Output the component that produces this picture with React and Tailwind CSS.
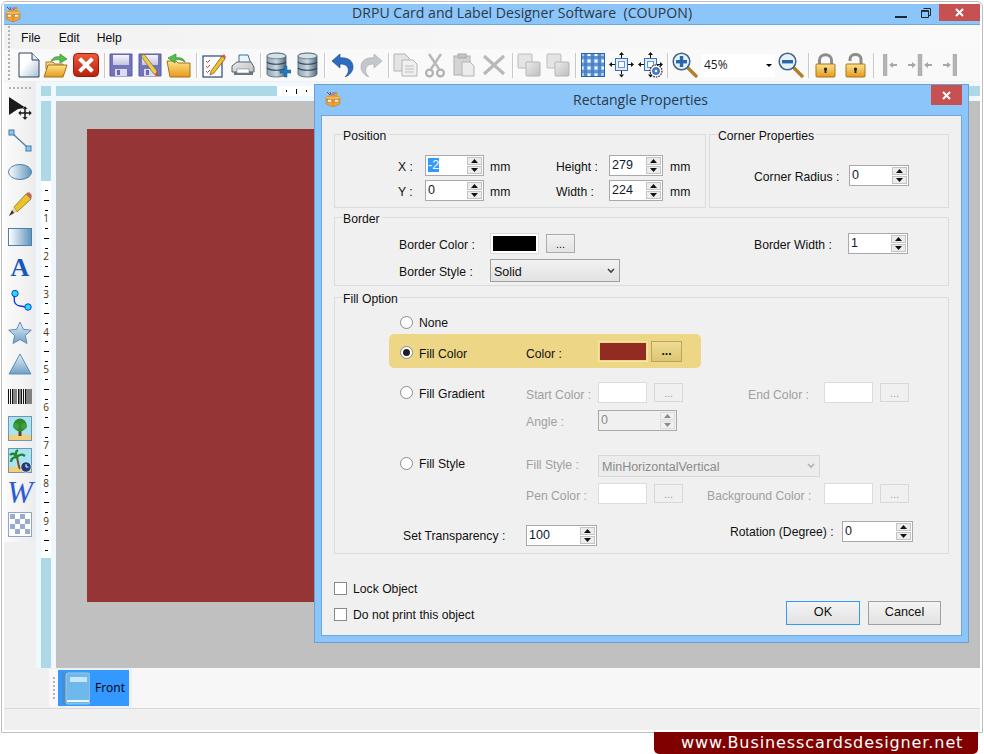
import React from "react";

const Defs = () => (
  <svg className="absolute w-0 h-0" aria-hidden="true">
    <defs>
      <linearGradient id="gBlueH" x1="0" x2="1" y1="0" y2="0"><stop offset="0" stopColor="#ffffff" /><stop offset="1" stopColor="#5f95bd" /></linearGradient>
      <linearGradient id="gBlueV" x1="0" x2="0" y1="0" y2="1"><stop offset="0" stopColor="#e8f1f8" /><stop offset="1" stopColor="#6e9fc6" /></linearGradient>
      <linearGradient id="gGold" x1="0" x2="0" y1="0" y2="1"><stop offset="0" stopColor="#fde38a" /><stop offset="1" stopColor="#e69a1c" /></linearGradient>
      <linearGradient id="gRed" x1="0" x2="0" y1="0" y2="1"><stop offset="0" stopColor="#ee5a3c" /><stop offset="1" stopColor="#b8200c" /></linearGradient>
      <linearGradient id="gDoc" x1="0" x2="1" y1="0" y2="1"><stop offset="0.4" stopColor="#ffffff" /><stop offset="1" stopColor="#a9bfd8" /></linearGradient>
      <linearGradient id="gDb" x1="0" x2="1" y1="0" y2="0"><stop offset="0" stopColor="#8ea3b3" /><stop offset="0.5" stopColor="#c9d6de" /><stop offset="1" stopColor="#51697c" /></linearGradient>
      <linearGradient id="gGray" x1="0" x2="1" y1="0" y2="1"><stop offset="0" stopColor="#ececec" /><stop offset="1" stopColor="#bdbdbd" /></linearGradient>
      <linearGradient id="gFlop" x1="0" x2="0" y1="0" y2="1"><stop offset="0" stopColor="#f4f4fb" /><stop offset="1" stopColor="#c4c4e2" /></linearGradient>
    </defs>
  </svg>
);

const BoxLogo = ({ className }) => (
  <svg viewBox="0 0 16 16" className={className}>
    <path d="M2 1l3 3M5 1l1 3" stroke="#555" strokeWidth="1" />
    <circle cx="8.5" cy="2.5" r="1.5" fill="#d75fa0" />
    <circle cx="11" cy="2" r="1.3" fill="#7ab648" />
    <circle cx="12" cy="4" r="1.2" fill="#e8b020" />
    <path d="M1 6l7-2 7 2v7l-7 3-7-3z" fill="#f0a53a" stroke="#c97a18" strokeWidth="0.6" />
    <path d="M8 7v9" stroke="#c97a18" strokeWidth="0.8" />
    <path d="M1 6l7 1.5L15 6" fill="none" stroke="#fbd488" strokeWidth="0.8" />
    <rect x="2.5" y="8.5" width="4" height="2.5" fill="#fff" stroke="#8a5a10" strokeWidth="0.4" />
    <rect x="9.5" y="8.5" width="4" height="2.5" fill="#fff" stroke="#8a5a10" strokeWidth="0.4" />
  </svg>
);

const NewDoc = () => (
  <svg viewBox="0 0 22 26" className="w-[22px] h-[26px]">
    <path d="M1 1h13l7 7v17H1z" fill="url(#gDoc)" stroke="#2a4258" strokeWidth="1" />
    <path d="M14 1v7h7" fill="#dfe8f0" stroke="#2a4258" strokeWidth="1" />
  </svg>
);
const FolderOpen = () => (
  <svg viewBox="0 0 25 26" className="w-[25px] h-[26px]">
    <path d="M3 10h7l2 2h8v5H3z" fill="#f7d68a" stroke="#b0781c" />
    <path d="M6 25L1 25 5 13h19l-4 12z" fill="url(#gGold)" stroke="#a8701a" />
    <path d="M8 9c2-4 6-5 9-4V2l7 5-7 4V8c-3-1-6 0-9 1z" fill="#58c04a" stroke="#2c8a2c" strokeWidth="0.7" />
  </svg>
);
const RedX = () => (
  <svg viewBox="0 0 26 24" className="w-[26px] h-[24px]">
    <rect x="0.5" y="0.5" width="25" height="23" rx="4" fill="url(#gRed)" stroke="#9a1a08" />
    <path d="M8 7l10 10M18 7L8 17" stroke="#fff" strokeWidth="4" strokeLinecap="square" />
  </svg>
);
const Floppy = ({ pencil }) => (
  <svg viewBox="0 0 24 24" className="w-[24px] h-[24px]">
    <path d="M1 1h22v22H1z" fill="#7474b8" stroke="#5a5aa2" />
    <rect x="4" y="2" width="16" height="10" fill="url(#gFlop)" />
    <rect x="6" y="16" width="12" height="7" fill="#dcdcee" />
    <rect x="8" y="17" width="3" height="5" fill="#6a6ab0" />
    {pencil && <path d="M3 3l3-2 13 17-1 4-3-2z" fill="#ecca52" stroke="#6a5a20" strokeWidth="0.6" />}
    {pencil && <circle cx="18.5" cy="21.5" r="1.6" fill="#d84a3a" />}
  </svg>
);
const FolderBack = () => (
  <svg viewBox="0 0 25 26" className="w-[25px] h-[26px]">
    <path d="M1 9h9l2 2h12v14H4z" fill="url(#gGold)" stroke="#a8701a" />
    <path d="M19 10c-1-3-4-5-9-4V2L2 6l7 5V8c4-1 7 0 10 2z" fill="#58c04a" stroke="#2c8a2c" strokeWidth="0.7" />
  </svg>
);
const EditIcon = () => (
  <svg viewBox="0 0 24 25" className="w-[24px] h-[25px]">
    <rect x="1" y="3" width="19" height="21" fill="#fff" stroke="#27477a" strokeWidth="1.2" />
    <path d="M4 8l1.5 1.5L8 7M4 13l1.5 1.5L8 12M4 18l1.5 1.5L8 17" stroke="#d4382c" strokeWidth="1" fill="none" />
    <path d="M9 18l-1 4 4-2L23 6l-3-3z" fill="#f0c030" stroke="#6a5414" strokeWidth="0.7" />
    <path d="M20 3l3 3 1-2-2-3z" fill="#e0584a" />
  </svg>
);
const Printer = () => (
  <svg viewBox="0 0 24 24" className="w-[24px] h-[24px]">
    <path d="M8 2h9l3 9H8z" fill="#eaf4fc" stroke="#3f6f96" />
    <path d="M1 13l5-4h14l3 5v5H1z" fill="url(#gGray)" stroke="#55636e" />
    <path d="M3 19h19v3H3z" fill="#6c7680" />
    <rect x="6" y="16" width="12" height="4" fill="#fff" stroke="#7d8890" strokeWidth="0.6" />
  </svg>
);
const Db = ({ plus }) => (
  <svg viewBox={plus ? "0 0 25 26" : "0 0 21 26"} className={plus ? "w-[25px] h-[26px]" : "w-[21px] h-[26px]"}>
    <path d="M1 4c0-4 19-4 19 0v18c0 4-19 4-19 0z" fill="url(#gDb)" stroke="#4c6172" strokeWidth="0.8" />
    <ellipse cx="10.5" cy="4" rx="9.5" ry="2.8" fill="#d6e0e7" stroke="#4c6172" strokeWidth="0.7" />
    <path d="M1 10c3 3 16 3 19 0M1 16c3 3 16 3 19 0" fill="none" stroke="#33495a" strokeWidth="1.2" />
    {plus && <path d="M18 14h3v4h4v3h-4v4h-3v-4h-4v-3h4z" fill="#2479b8" stroke="#15598c" strokeWidth="0.5" />}
  </svg>
);
const Undo = ({ gray }) => (
  <svg viewBox="0 0 23 24" className={`w-[23px] h-[24px] ${gray ? "-scale-x-100" : ""}`}>
    <path d="M1 8l8-7v4c8-1 13 3 13 9 0 4-3 8-8 10 3-3 4-6 3-9-1-3-4-4-8-4v4z" fill={gray ? "#c4c8cc" : "#2f6cc0"} stroke={gray ? "#a8adb2" : "#1d4e96"} strokeWidth="0.7" />
  </svg>
);
const CopyGray = () => (
  <svg viewBox="0 0 25 24" className="w-[25px] h-[24px]">
    <path d="M1 1h11l4 4v13H1z" fill="#e4e4e4" stroke="#b4b4b4" />
    <path d="M9 7h11l4 4v12H9z" fill="#f0f0f0" stroke="#b4b4b4" />
    <path d="M12 13h9M12 16h9M12 19h9" stroke="#bcbcbc" />
  </svg>
);
const CutGray = () => (
  <svg viewBox="0 0 20 25" className="w-[20px] h-[25px]">
    <path d="M4 1l10 15M16 1L6 16" stroke="#b8b8b8" strokeWidth="2.4" />
    <circle cx="4.5" cy="20" r="3.4" fill="none" stroke="#b0b0b0" strokeWidth="2.2" />
    <circle cx="15.5" cy="20" r="3.4" fill="none" stroke="#b0b0b0" strokeWidth="2.2" />
  </svg>
);
const PasteGray = () => (
  <svg viewBox="0 0 22 24" className="w-[22px] h-[24px]">
    <rect x="1" y="3" width="16" height="19" fill="#d4d4d4" stroke="#b0b0b0" />
    <rect x="5" y="1" width="8" height="4" fill="#c4c4c4" stroke="#a8a8a8" />
    <path d="M9 9h8l4 4v10H9z" fill="#ececec" stroke="#b4b4b4" />
  </svg>
);
const XGray = () => (
  <svg viewBox="0 0 24 22" className="w-[24px] h-[22px]">
    <path d="M2 2l20 18M22 2L2 20" stroke="#b9b9b9" strokeWidth="3.2" />
  </svg>
);
const Layers = () => (
  <svg viewBox="0 0 24 24" className="w-[24px] h-[24px]">
    <rect x="1" y="1" width="14" height="14" rx="1" fill="#e4e4e4" stroke="#bcbcbc" />
    <rect x="9" y="9" width="14" height="14" rx="1" fill="url(#gGray)" stroke="#b4b4b4" />
  </svg>
);
const GridIcon = () => (
  <svg viewBox="0 0 24 24" className="w-[24px] h-[24px]">
    <rect width="24" height="24" fill="#a8c6ea" />
    <path d="M1 3h22v3H1zM1 10h22v3H1zM1 17h22v3H1z" fill="#4a86cf" opacity="0.8" />
    <path d="M3 1h3v22H3zM10 1h3v22h-3zM17 1h3v22h-3z" fill="#3d7cc9" opacity="0.8" />
    <path d="M7 1h2v2H7zM14 1h2v2h-2zM7 7h2v2H7zM14 7h2v2h-2zM1 7h1v2H1zM21 7h2v2h-2zM7 14h2v2H7zM14 14h2v2h-2zM1 14h1v2H1zM21 14h2v2h-2zM7 21h2v2H7zM14 21h2v2h-2z" fill="#fff" />
    <rect x="0.5" y="0.5" width="23" height="23" fill="none" stroke="#2a62a8" />
  </svg>
);
const MoveIcon = ({ gear }) => (
  <svg viewBox="0 0 25 26" className="w-[25px] h-[26px]">
    <rect x="6.5" y="6.5" width="12" height="12" fill="#e4eefa" stroke="#3a6ec0" />
    <rect x="9.5" y="9.5" width="6" height="6" fill="#fff" stroke="#6a96d8" />
    <path d="M12.5 0l-2.5 3h5zM12.5 25.5l-2.5-3h5zM0 12.5l3-2.5v5zM25 12.5l-3-2.5v5z" fill="#111" />
    <path d="M12.5 3v3M12.5 19v3M3 12.5h3M19 12.5h3" stroke="#111" />
    {gear && <circle cx="18" cy="19" r="6" fill="#fff" stroke="#222" strokeWidth="1.2" strokeDasharray="1.6 1" />}
    {gear && <circle cx="18" cy="19" r="3.6" fill="#4a80d8" stroke="#1d3c78" strokeWidth="0.6" />}
    {gear && <circle cx="18" cy="19" r="1.2" fill="#fff" />}
  </svg>
);
const Mag = ({ plus }) => (
  <svg viewBox="0 0 26 26" className="w-[26px] h-[26px]">
    <path d="M15 15l9 9" stroke="#b0802c" strokeWidth="3.4" strokeLinecap="round" />
    <circle cx="9.5" cy="9.5" r="8.3" fill="#e6f1fa" stroke="#43647e" strokeWidth="1.5" />
    <rect x="4" y="8" width="11" height="3.4" fill="#2a66a8" />
    {plus && <rect x="7.8" y="4" width="3.4" height="11" fill="#2a66a8" />}
  </svg>
);
const Lock = ({ open }) => (
  <svg viewBox="0 0 21 25" className="w-[21px] h-[25px]">
    {open
      ? <path d="M5 8V6c0-6 11-6 11 0v6" fill="none" stroke="#8c8c8c" strokeWidth="3" />
      : <path d="M4.5 12V7c0-7 12-7 12 0v5" fill="none" stroke="#8c8c8c" strokeWidth="3" />}
    <rect x="1" y="11" width="19" height="13" rx="1" fill="url(#gGold)" stroke="#a8761a" />
    <circle cx="10.5" cy="16" r="1.6" fill="#222" />
    <rect x="9.6" y="16" width="1.8" height="4" fill="#222" />
  </svg>
);
const Bar = ({ x }) => <rect x={x} y="0" width="4" height="22" fill="#b4b4b4" stroke="#a0a0a0" strokeWidth="0.4" />;
const AlignL = () => (
  <svg viewBox="0 0 14 22" className="w-[14px] h-[22px]"><Bar x={0} /><path d="M6 11l4-3v2h4v2h-4v2z" fill="#a8a8a8" /></svg>
);
const AlignC = () => (
  <svg viewBox="0 0 24 22" className="w-[24px] h-[22px]"><Bar x={10} /><path d="M8 11l-4-3v2H0v2h4v2zM16 11l4-3v2h4v2h-4v2z" fill="#a8a8a8" /></svg>
);
const AlignR = () => (
  <svg viewBox="0 0 14 22" className="w-[14px] h-[22px]"><Bar x={10} /><path d="M8 11L4 8v2H0v2h4v2z" fill="#a8a8a8" /></svg>
);
const Sep = ({ cls }) => <div className={`w-px h-[25px] bg-[#c8c8c8] border-r border-white box-content ${cls}`} />;

const Gripper = ({ cls }) => (
  <div className={`flex flex-col gap-[2px] ${cls}`}>
    {[0, 1, 2, 3, 4, 5].map((i) => <span key={i} className="block w-[2px] h-[2px] bg-[#b4b4b4]" />)}
  </div>
);

const Tri = ({ up, dim }) => (
  <svg viewBox="0 0 7 4" className="w-[7px] h-[4px]">
    <path d={up ? "M3.5 0L7 4H0z" : "M0 0h7L3.5 4z"} fill={dim ? "#8a8a8a" : "#111"} />
  </svg>
);

const Spin = ({ value, w, selected, dim }) => (
  <div className={`flex shrink-0 h-[21px] border border-[#a9a9a9] p-px ${w} ${dim ? "bg-[#f0f0f0]" : "bg-white"}`}>
    <span className={`flex-1 pl-px text-[12.5px] leading-[17px] ${dim ? "text-[#8a8a8a]" : "text-[#0a1a30]"}`}>
      {selected ? <span className="bg-[#3399ff] text-white">{value}</span> : value}
    </span>
    <div className="w-[15px] flex flex-col gap-px">
      <span className={`flex-1 flex items-center justify-center ${dim ? "bg-[#f0f0f0] border border-[#dcdcdc]" : "bg-[#ececec] border border-[#c4c4c4]"}`}><Tri up dim={dim} /></span>
      <span className={`flex-1 flex items-center justify-center ${dim ? "bg-[#f0f0f0] border border-[#dcdcdc]" : "bg-[#ececec] border border-[#c4c4c4]"}`}><Tri dim={dim} /></span>
    </div>
  </div>
);

/* Label: the reference's captions sit a little below the centre of their row */
const L = ({ cls, pt = "pt-[4px]", children }) => <span className={`shrink-0 ${pt} ${cls || ""}`}>{children}</span>;

const Swatch = ({ cls, color }) => <div className={`shrink-0 h-[21px] border border-[#dcdcdc] p-[2px] bg-white ${cls}`}><div className={`w-full h-full ${color}`} /></div>;
const Blank = ({ cls }) => <div className={`shrink-0 w-[49px] h-[21px] bg-white border border-[#dcdcdc] ${cls || ""}`} />;
const DimBtn = ({ cls }) => (
  <div className={`shrink-0 w-[29px] h-[19px] border border-[#d8d8d8] bg-[#f0f0f0] text-[#a0a0a0] text-[11px] leading-[19px] text-center ${cls}`}>...</div>
);
const Radio = ({ on, cls }) => (
  <div className={`shrink-0 w-[13px] h-[13px] rounded-full border border-[#8a8a8a] bg-white flex items-center justify-center ${cls}`}>
    {on && <span className="block w-[7px] h-[7px] rounded-full bg-[#1f1f1f]" />}
  </div>
);
const Group = ({ title, titleCls, cls, children }) => (
  <div className={`relative border border-[#dcdcdc] ${cls}`}>
    <span className={`absolute -top-[5px] bg-[#f0f0f0] pr-[2px] leading-[13px] text-[#101010] ${titleCls}`}>{title}</span>
    {children}
  </div>
);
const Win8Btn = ({ cls, children }) => (
  <div className={`h-[24px] flex items-center justify-center text-[12.7px] text-[#101010] bg-gradient-to-b from-[#f4f4f4] to-[#e2e2e2] ${cls}`}>{children}</div>
);

const Ruler = () => (
  <div className="w-[10px] flex-1 bg-[#add8e6] flex flex-col">
    <div className="h-[80px]" />
    <div className="h-[377px] bg-white flex flex-col items-center overflow-hidden">
      {[0, 1, 2, 3, 4, 5, 6, 7, 8, 9].map((n) => (
        <div key={n} className="h-[37.8px] shrink-0 flex flex-col items-center">
          <div className="h-0 flex items-center text-[10px] text-[#4a3010] font-['Open_Sans',sans-serif]">{n > 0 ? n : ""}</div>
          <div className="w-[3px] h-px bg-black mt-[9px]" />
          <div className="w-[5px] h-px bg-black mt-[9px]" />
          <div className="w-[3px] h-px bg-black mt-[9px]" />
        </div>
      ))}
    </div>
    <div className="flex-1" />
  </div>
);

const toolCls = "flex items-center justify-center w-[32px] shrink-0";

export default function App() {
  return (
    <div className="relative w-[984px] h-[754px] bg-white overflow-hidden font-['Liberation_Sans',Arial,sans-serif] text-[12.2px] text-[#101010]">
      <Defs />
      <div className="ml-px mt-px w-[982px] h-[732px] border border-[#bdbdbd] rounded-t-[6px] bg-white p-[2px] flex flex-col">
        {/* Title bar */}
        <div className="h-[21px] shrink-0 bg-[#8cc5f9] border-b border-[#6fa8dc] flex items-center rounded-tr-[4px]">
          <BoxLogo className="w-[16px] h-[16px] ml-px" />
          <div className="flex-1 pl-[331px] pb-[2px] font-['Open_Sans',sans-serif] text-[14.1px] text-[#2a3a48]">DRPU Card and Label Designer Software&nbsp; (COUPON)</div>
          <div className="w-[12px] h-[2px] bg-[#1c2a36] mt-[5px] mr-[14px]" />
          <svg viewBox="0 0 10 10" className="w-[10px] h-[10px] mb-[3px] mr-[8px]"><path d="M2.5 0.5h7v7h-2M0.5 2.5h7v7h-7z" fill="none" stroke="#1c2a36" /><rect x="0.5" y="2.5" width="7" height="1.4" fill="#1c2a36" /></svg>
          <div className="w-[41px] h-[17px] self-start bg-[#c75050] flex items-center justify-center">
            <svg viewBox="0 0 9 9" className="w-[9px] h-[9px]"><path d="M1 1l7 7M8 1L1 8" stroke="#fff" strokeWidth="2" /></svg>
          </div>
        </div>
        {/* Menu */}
        <div className="h-[24px] shrink-0 bg-gradient-to-r from-[#f2f2f2] to-[#fafafa] flex items-center">
          <Gripper cls="ml-[4px]" />
          <span className="ml-[11px] pt-[2px]">File</span>
          <span className="ml-[18px] pt-[2px]">Edit</span>
          <span className="ml-[17px] pt-[2px]">Help</span>
        </div>
        {/* Toolbar */}
        <div className="h-[33px] shrink-0 bg-[#f0f0f0]">
          <div className="h-[32px] bg-[#f9f9f9] rounded-l-[4px] flex items-center">
            <div className="flex flex-col gap-[2px] ml-[4px]">
              {[0, 1, 2, 3, 4, 5, 6, 7].map((i) => <span key={i} className="block w-[2px] h-[2px] bg-[#b4b4b4]" />)}
            </div>
            <div className="ml-[8px]"><NewDoc /></div>
            <div className="ml-[3px]"><FolderOpen /></div>
            <div className="ml-[5px]"><RedX /></div>
            <Sep cls="ml-[5px]" />
            <div className="ml-[3px]"><Floppy /></div>
            <div className="ml-[5px]"><Floppy pencil /></div>
            <div className="ml-[4px]"><FolderBack /></div>
            <Sep cls="ml-[5px]" />
            <div className="ml-[4px]"><EditIcon /></div>
            <div className="ml-[5px]"><Printer /></div>
            <Sep cls="ml-[5px]" />
            <div className="ml-[4px]"><Db plus /></div>
            <div className="ml-[6px]"><Db /></div>
            <Sep cls="ml-[6px]" />
            <div className="ml-[5px]"><Undo /></div>
            <div className="ml-[6px]"><Undo gray /></div>
            <Sep cls="ml-[5px]" />
            <div className="ml-[3px]"><CopyGray /></div>
            <div className="ml-[7px]"><CutGray /></div>
            <div className="ml-[8px]"><PasteGray /></div>
            <div className="ml-[7px]"><XGray /></div>
            <Sep cls="ml-[6px]" />
            <div className="ml-[3px]"><Layers /></div>
            <div className="ml-[5px]"><Layers /></div>
            <Sep cls="ml-[5px]" />
            <div className="ml-[4px]"><GridIcon /></div>
            <div className="ml-[4px]"><MoveIcon /></div>
            <div className="ml-[4px]"><MoveIcon gear /></div>
            <Sep cls="ml-[4px]" />
            <div className="ml-[3px]"><Mag plus /></div>
            <div className="ml-[3px] w-[74px] h-[23px] bg-white flex items-center pl-[3px] text-[12px] text-[#222] font-['Open_Sans',sans-serif]">
              <span className="flex-1">45%</span>
              <span className="w-0 h-0 border-x-[3px] border-x-transparent border-t-[3px] border-t-black mr-[3px]" />
            </div>
            <div className="ml-[3px]"><Mag /></div>
            <Sep cls="ml-[4px]" />
            <div className="ml-[5px]"><Lock /></div>
            <div className="ml-[9px]"><Lock open /></div>
            <Sep cls="ml-[7px]" />
            <div className="ml-[8px]"><AlignL /></div>
            <div className="ml-[11px]"><AlignC /></div>
            <div className="ml-[11px]"><AlignR /></div>
          </div>
        </div>
        {/* Main */}
        <div className="h-[586px] shrink-0 flex">
          {/* Left tools */}
          <div className="w-[32px] shrink-0 bg-[#f0f0f0]">
            <div className="h-[460px] bg-gradient-to-r from-[#fbfbfb] to-[#ececec] flex flex-col items-center">
              <div className="flex gap-[2px] mt-[5px]">
                {[0, 1, 2, 3, 4, 5].map((i) => <span key={i} className="block w-[2px] h-[2px] bg-[#b4b4b4]" />)}
              </div>
              <div className={`${toolCls} h-[25px] mt-[7px]`}>
                <svg viewBox="0 0 24 25" className="w-[24px] h-[25px]">
                  <path d="M1 1l17 11-8 1-9 6z" fill="#1b1b1b" />
                  <path d="M17 10l-3 3h2v3h-3v-2l-3 3 3 3v-2h3v3h-2l3 3 3-3h-2v-3h3v2l3-3-3-3v2h-3v-3h2z" fill="#222" stroke="#f0f0f0" strokeWidth="0.4" />
                </svg>
              </div>
              <div className={`${toolCls} h-[23px] mt-[8px]`}>
                <svg viewBox="0 0 24 23" className="w-[24px] h-[23px]">
                  <path d="M5 5l14 13" stroke="#4f7fa6" strokeWidth="1.3" />
                  <rect x="1" y="1" width="5" height="5" fill="#8cc8ee" stroke="#3e7aa6" />
                  <rect x="18" y="17" width="5" height="5" fill="#8cc8ee" stroke="#3e7aa6" />
                </svg>
              </div>
              <div className={`${toolCls} h-[16px] mt-[12px]`}>
                <svg viewBox="0 0 24 16" className="w-[24px] h-[16px]"><ellipse cx="12" cy="8" rx="11.5" ry="7.5" fill="url(#gBlueH)" stroke="#4f7fa6" /></svg>
              </div>
              <div className={`${toolCls} h-[25px] mt-[12px]`}>
                <svg viewBox="0 0 24 25" className="w-[24px] h-[25px]">
                  <path d="M6 15L18 2l5 5L9 20z" fill="#e8c32a" stroke="#7a6410" strokeWidth="0.7" />
                  <path d="M18 2l2-1.5c2 0 3.5 2 3.5 3.5L23 7z" fill="#d85a50" stroke="#8a8a8a" strokeWidth="0.5" />
                  <path d="M6 15l3 5-8 4z" fill="#e8d0a0" />
                  <path d="M1 24l3-6 2 3z" fill="#333" />
                </svg>
              </div>
              <div className={`${toolCls} h-[18px] mt-[11px]`}>
                <div className="w-[24px] h-[18px] border border-[#4f7fa6] bg-gradient-to-r from-white to-[#5f95bd]" />
              </div>
              <div className={`${toolCls} h-[20px] mt-[12px] font-['Liberation_Serif',serif] font-bold text-[26px] leading-[20px] text-[#1a55c0]`}>A</div>
              <div className={`${toolCls} h-[22px] mt-[11px]`}>
                <svg viewBox="0 0 24 22" className="w-[24px] h-[22px]">
                  <path d="M7 5c-2 6-1 11 5 12l6 1" fill="none" stroke="#1a35e0" strokeWidth="1.4" />
                  <circle cx="7" cy="4.5" r="3.2" fill="#20e0f0" stroke="#1a35e0" />
                  <circle cx="20" cy="18" r="3.2" fill="#20e0f0" stroke="#1a35e0" />
                </svg>
              </div>
              <div className={`${toolCls} h-[24px] mt-[10px]`}>
                <svg viewBox="0 0 24 24" className="w-[24px] h-[24px]"><path d="M12 1l3.3 7.3 8 .9-6 5.3 1.7 8-7-4-7 4 1.7-8-6-5.3 8-.9z" fill="url(#gBlueV)" stroke="#5f8fb8" strokeLinejoin="round" /></svg>
              </div>
              <div className={`${toolCls} h-[22px] mt-[8px]`}>
                <svg viewBox="0 0 24 22" className="w-[24px] h-[22px]"><path d="M12 1l11 20H1z" fill="url(#gBlueV)" stroke="#5f8fb8" strokeLinejoin="round" /></svg>
              </div>
              <div className={`${toolCls} h-[15px] mt-[14px]`}>
                <svg viewBox="0 0 24 15" className="w-[24px] h-[15px]">
                  <path d="M0.5 0v15M2.5 0v15M4.5 0v15M6 0v15M8 0v15M10.5 0v15M12 0v15M13.5 0v15M15.5 0v15M17.5 0v15M19 0v15M21 0v15M23 0v15" stroke="#111" strokeWidth="1" />
                </svg>
              </div>
              <div className={`${toolCls} h-[25px] mt-[12px]`}>
                <svg viewBox="0 0 24 25" className="w-[24px] h-[25px]">
                  <rect x="0.5" y="0.5" width="23" height="24" fill="#a8e4f4" stroke="#6f97b4" />
                  <rect x="1" y="19" width="22" height="5" fill="#f4cf78" />
                  <rect x="10.5" y="12" width="3" height="8" fill="#6a4020" />
                  <circle cx="12" cy="9" r="6.5" fill="#2f8a2f" />
                  <circle cx="8" cy="10" r="3" fill="#3da03d" />
                  <circle cx="16" cy="10" r="3" fill="#3da03d" />
                </svg>
              </div>
              <div className={`${toolCls} h-[25px] mt-[7px]`}>
                <svg viewBox="0 0 24 25" className="w-[24px] h-[25px]">
                  <rect x="0.5" y="0.5" width="23" height="24" fill="#a8e4f4" stroke="#6f97b4" />
                  <rect x="1" y="19" width="22" height="5" fill="#f4cf78" />
                  <path d="M9 9c1 4 1 8 3 12" stroke="#7a5020" strokeWidth="2" fill="none" />
                  <path d="M9 9C6 5 4 5 2 7M9 9c-2-4-1-6 1-7M9 9c3-3 5-3 8-1M9 9c-4 0-6 2-6 5" stroke="#1c8a2c" strokeWidth="2.4" fill="none" />
                  <circle cx="18" cy="19" r="5.2" fill="#1d3c78" stroke="#fff" strokeWidth="0.7" />
                  <path d="M18 16v3h2.5" stroke="#fff" strokeWidth="1" fill="none" />
                </svg>
              </div>
              <div className={`${toolCls} h-[23px] mt-[8px] font-['Liberation_Serif',serif] italic text-[31px] leading-[23px] text-[#2c5cd4]`}>W</div>
              <div className={`${toolCls} h-[25px] mt-[8px]`}>
                <svg viewBox="0 0 24 25" className="w-[24px] h-[25px]">
                  <rect x="0.5" y="0.5" width="23" height="24" fill="#fff" stroke="#8fa4cc" />
                  <path d="M2 2h5v5H2zM12 2h5v5h-5zM7 7h5v5H7zM17 7h5v5h-5zM2 12h5v5H2zM12 12h5v5h-5zM7 17h5v5H7zM17 17h5v5h-5z" fill="#9aabd0" />
                </svg>
              </div>
            </div>
          </div>
          {/* Editor */}
          <div className="flex-1 min-w-0 bg-[#f0f8ff] flex flex-col">
            <div className="h-[10px] mt-[4px] flex shrink-0">
              <div className="w-[10px] ml-[5px] bg-[#add8e6]" />
              <div className="ml-[5px] flex-1 flex">
                <div className="w-[221px] bg-[#add8e6]" />
                <div className="w-[500px] bg-white flex items-center">
                  <span className="ml-[9px] w-px h-[2px] bg-black" />
                  <span className="ml-[9px] w-px h-[5px] bg-black" />
                  <span className="ml-[9px] w-px h-[2px] bg-black" />
                </div>
                <div className="flex-1 bg-[#add8e6]" />
              </div>
            </div>
            <div className="flex-1 mt-[5px] flex min-h-0">
              <div className="ml-[5px] flex flex-col"><Ruler /></div>
              <div className="ml-[5px] flex-1 bg-[#c0c0c0] pl-[31px] pt-[28px]">
                <div className="w-[380px] h-[473px] bg-[#953535]" />
              </div>
            </div>
          </div>
        </div>
        {/* Tabs */}
        <div className="h-[40px] shrink-0 bg-[#f0f0f0] flex">
          <div className="ml-[45px] w-[9px] bg-[#f8f8f8] flex items-center justify-center my-px"><Gripper /></div>
          <div className="w-[71px] h-[36px] mt-[2px] bg-[#3399ff] flex items-center">
            <svg viewBox="0 0 28 34" className="w-[28px] h-[34px] ml-[4px]">
              <rect x="0" y="2" width="28" height="31" rx="2" fill="#4d8cc4" />
              <rect x="4" y="2" width="24" height="31" rx="2" fill="#6fb8ec" stroke="#9cc8e8" />
              <rect x="8" y="6" width="17" height="5" fill="#c8e6fa" />
              <rect x="5" y="29" width="22" height="2" fill="#f0f8ff" />
            </svg>
            <span className="ml-[5px] text-[12px] text-black font-['Open_Sans',sans-serif]">Front</span>
          </div>
          <div className="flex-1 bg-[#f7f7f7] ml-[2px] border-l border-[#f0f0f0]" />
        </div>
        {/* Status */}
        <div className="h-[22px] shrink-0 border-t border-[#d8d8d8] bg-[#f0f0f0]" />
      </div>

      {/* Banner */}
      <div className="-mt-px ml-[654px] w-[324px] h-[22px] bg-[#800000] rounded-b-[5px] pl-[27px] text-white font-['DejaVu_Sans',sans-serif] text-[16px] leading-[21px] tracking-[0.9px]">www.Businesscardsdesigner.net</div>

      {/* Dialog */}
      <div className="absolute left-[314px] top-[84px] w-[655px] h-[559px] bg-[#8cc5f9] border border-[#6f9fd0] flex flex-col">
        <div className="h-[30px] shrink-0 flex">
          <BoxLogo className="w-[16px] h-[16px] ml-[10px] mt-[6px]" />
          <div className="flex-1 pl-[232px] font-['Open_Sans',sans-serif] text-[14px] leading-[30px] text-[#2a3a48]">Rectangle Properties</div>
          <div className="w-[31px] h-[20px] mr-[6px] bg-[#c75050] flex items-center justify-center">
            <svg viewBox="0 0 9 9" className="w-[9px] h-[9px]"><path d="M1 1l7 7M8 1L1 8" stroke="#fff" strokeWidth="2" /></svg>
          </div>
        </div>
        <div className="flex-1 mx-[6px] mb-[6px] border border-[#6fa8dc] bg-[#f0f0f0] pl-[12px] pt-[18px]">
          {/* Row 1 */}
          <div className="flex gap-[3px]">
            <Group title="Position" titleCls="left-[8px]" cls="w-[372px] h-[74px] pt-[20px] flex flex-col gap-[4px]">
              <div className="flex items-center h-[21px]">
                <L cls="ml-[63px] w-[27px]">X :</L>
                <Spin value="-2" w="w-[59px]" selected />
                <L cls="ml-[6px] w-[66px]">mm</L>
                <L cls="w-[53px]">Height :</L>
                <Spin value="279" w="w-[54px]" />
                <L cls="ml-[7px]">mm</L>
              </div>
              <div className="flex items-center h-[21px]">
                <L cls="ml-[63px] w-[27px]">Y :</L>
                <Spin value="0" w="w-[59px]" />
                <L cls="ml-[6px] w-[66px]">mm</L>
                <L cls="w-[53px]">Width :</L>
                <Spin value="224" w="w-[54px]" />
                <L cls="ml-[7px]">mm</L>
              </div>
            </Group>
            <Group title="Corner Properties" titleCls="left-[8px]" cls="w-[240px] h-[74px] pt-[30px]">
              <div className="flex items-center h-[21px]">
                <L cls="ml-[44px] w-[95px]">Corner Radius :</L>
                <Spin value="0" w="w-[60px]" />
              </div>
            </Group>
          </div>
          {/* Border */}
          <Group title="Border" titleCls="left-[8px]" cls="mt-[9px] w-[615px] h-[69px] pt-[15px]">
            <div className="flex items-center h-[21px]">
              <L cls="ml-[64px] w-[91px]">Border Color :</L>
              <Swatch cls="w-[49px]" color="bg-black" />
              <div className="ml-[7px] w-[29px] h-[19px] border border-[#acacac] bg-gradient-to-b from-[#f2f2f2] to-[#e4e4e4] text-center text-[11px] leading-[19px]">...</div>
              <L cls="ml-[179px] w-[94px]">Border Width :</L>
              <Spin value="1" w="w-[60px]" />
            </div>
            <div className="flex items-center h-[23px] mt-[5px]">
              <L cls="ml-[64px] w-[91px]">Border Style :</L>
              <div className="w-[130px] h-[23px] border border-[#a0a0a0] bg-gradient-to-b from-[#f2f2f2] to-[#e2e2e2] flex items-center pl-[3px] pr-[4px] text-[12.5px]">
                <span className="flex-1 pt-[4px]">Solid</span>
                <svg viewBox="0 0 8 6" className="w-[8px] h-[6px]"><path d="M1 1l3 3 3-3" fill="none" stroke="#444" strokeWidth="1.6" /></svg>
              </div>
            </div>
          </Group>
          {/* Fill */}
          <Group title="Fill Option" titleCls="left-[8px]" cls="mt-[11px] w-[615px] h-[257px] flex flex-col">
            <div className="flex items-center h-[21px] mt-[14px]">
              <Radio cls="ml-[65px]" />
              <L cls="ml-[6px]" pt="pt-[2px]">None</L>
            </div>
            <div className="flex items-center h-[34px] w-[312px] mt-px ml-[54px] bg-[#edd685] rounded-[5px]">
              <Radio on cls="ml-[11px] mt-[2px]" />
              <L cls="ml-[6px] w-[107px]" pt="pt-[6px]">Fill Color</L>
              <L cls="w-[72px]" pt="pt-[6px]">Color :</L>
              <div className="w-[50px] h-[21px] border border-[#f6e6a8] p-px bg-[#edd685]"><div className="w-full h-full bg-[#922b21]" /></div>
              <div className="ml-[3px] w-[31px] h-[21px] border border-[#b8a45c] bg-gradient-to-b from-[#efdc94] to-[#dcc672] text-center text-[12px] font-bold leading-[19px]">...</div>
            </div>
            <div className="flex items-center h-[21px] mt-[14px]">
              <Radio cls="ml-[65px]" />
              <L cls="ml-[6px] w-[107px]">Fill Gradient</L>
              <L cls="w-[72px] text-[#a0a0a0]" pt="pt-[6px]">Start Color :</L>
              <Blank />
              <DimBtn cls="ml-[7px]" />
              <L cls="ml-[65px] w-[76px] text-[#a0a0a0]" pt="pt-[6px]">End Color :</L>
              <Blank />
              <DimBtn cls="ml-[7px]" />
            </div>
            <div className="flex items-center h-[21px] mt-[7px]">
              <L cls="ml-[191px] w-[72px] text-[#a0a0a0]">Angle :</L>
              <Spin value="0" w="w-[79px]" dim />
            </div>
            <div className="flex items-center h-[22px] mt-[24px]">
              <Radio cls="ml-[65px] -mt-[5px]" />
              <L cls="ml-[6px] w-[107px] -mt-[3px]" pt="pt-0">Fill Style</L>
              <L cls="w-[72px] text-[#a0a0a0] pb-[2px]" pt="pt-0">Fill Style :</L>
              <div className="w-[222px] h-[22px] border border-[#d8d8d8] bg-[#ececec] flex items-center pl-[3px] pr-[4px] text-[#8a8a8a] text-[12.5px]">
                <span className="flex-1 pt-[2px]">MinHorizontalVertical</span>
                <svg viewBox="0 0 8 6" className="w-[8px] h-[6px]"><path d="M1 1l3 3 3-3" fill="none" stroke="#b0b0b0" strokeWidth="1.6" /></svg>
              </div>
            </div>
            <div className="flex items-center h-[21px] mt-[6px]">
              <L cls="ml-[191px] w-[72px] text-[#a0a0a0]" pt="pt-[6px]">Pen Color :</L>
              <Blank />
              <DimBtn cls="ml-[7px]" />
              <L cls="ml-[24px] w-[117px] text-[#a0a0a0]" pt="pt-[6px]">Background Color :</L>
              <Blank />
              <DimBtn cls="ml-[7px]" />
            </div>
            <div className="flex h-[25px] mt-[17px]">
              <div className="flex items-center self-end">
                <L cls="ml-[68px] w-[123px]" pt="pt-[2px]">Set Transparency :</L>
                <Spin value="100" w="w-[71px]" />
              </div>
              <div className="flex items-center self-start">
                <L cls="ml-[133px] w-[112px]" pt="pt-[2px]">Rotation (Degree) :</L>
                <Spin value="0" w="w-[71px]" />
              </div>
            </div>
          </Group>
          {/* Bottom */}
          <div className="flex h-[43px] mt-[28px]">
            <div className="flex flex-col gap-[13px] w-[452px]">
              <div className="flex items-center h-[13px]">
                <span className="w-[13px] h-[13px] border border-[#8a8a8a] bg-white" />
                <L cls="ml-[6px]" pt="pt-[2px]">Lock Object</L>
              </div>
              <div className="flex items-center h-[13px]">
                <span className="w-[13px] h-[13px] border border-[#8a8a8a] bg-white" />
                <L cls="ml-[6px]" pt="pt-[2px]">Do not print this object</L>
              </div>
            </div>
            <Win8Btn cls="mt-[19px] w-[74px] border border-[#3399ff]">OK</Win8Btn>
            <Win8Btn cls="mt-[19px] ml-[8px] w-[73px] border border-[#a0a0a0]">Cancel</Win8Btn>
          </div>
        </div>
      </div>
    </div>
  );
}
